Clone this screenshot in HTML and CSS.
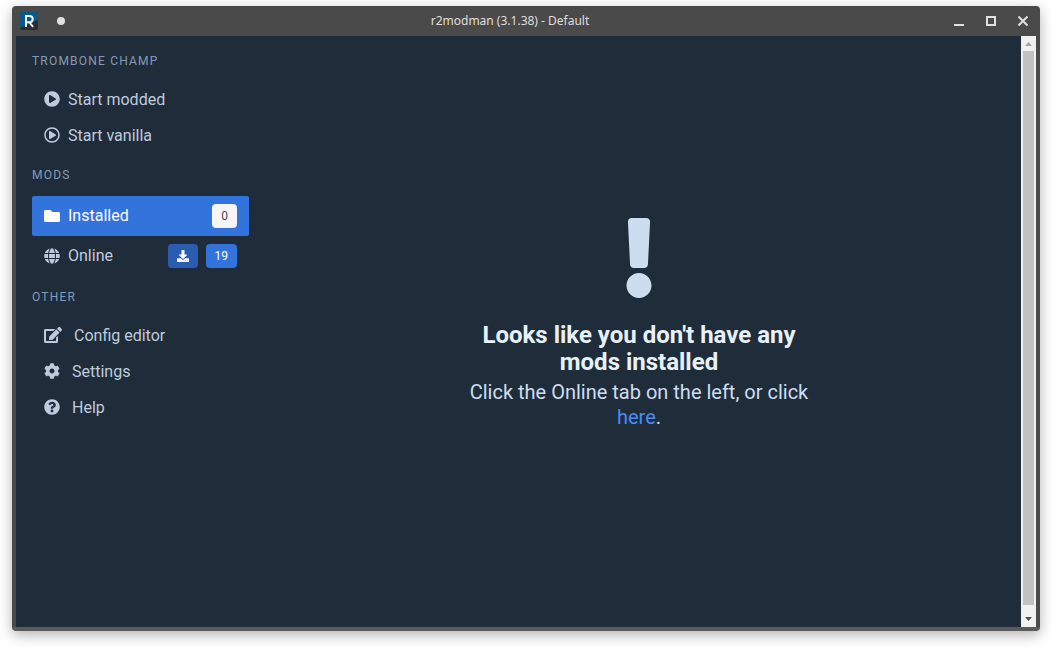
FILE: index.html
```html
<!DOCTYPE html>
<html lang="en">
<head>
<meta charset="utf-8">
<title>r2modman (3.1.38) - Default</title>
<link rel="stylesheet" href="styles.css">
</head>
<body>
<div class="window">
  <header class="titlebar">
    <div class="titlebar-group">
      <button class="window-button" type="button" aria-label="Window menu">
        <svg width="20" height="20" viewBox="0 0 20 20"><rect x="1" y="1" width="18" height="18" rx="2" fill="#2b2d2f"/><path d="M1 3a2 2 0 0 1 2-2h14a2 2 0 0 1 2 2v6L1 17z" fill="#075a87"/><path d="M7 16V5h3.200c2.300 0 3.500 1.100 3.500 3s-1.200 3.200-3.500 3.200H7M10.300 11.200l3.800 4.800" fill="none" stroke="#f2f4f6" stroke-width="2"/></svg>
      </button>
      <button class="window-button" type="button" aria-label="Keep on all desktops"><span class="pin-dot"></span></button>
    </div>
    <div class="window-title">r2modman (3.1.38) - Default</div>
    <div class="titlebar-group">
      <button class="window-button" type="button" aria-label="Minimize">
        <svg width="10" height="10" viewBox="0 0 10 10"><path d="M0 8h10v2H0z" fill="#e0e0e0"/></svg>
      </button>
      <button class="window-button" type="button" aria-label="Maximize">
        <svg width="10" height="10" viewBox="0 0 10 10"><path d="M1 1h8v8H1z" fill="none" stroke="#e0e0e0" stroke-width="2"/></svg>
      </button>
      <button class="window-button" type="button" aria-label="Close">
        <svg width="10" height="10" viewBox="0 0 10 10"><path d="M0.500 0.500l9 9M9.500 0.500l-9 9" stroke="#e0e0e0" stroke-width="2"/></svg>
      </button>
    </div>
  </header>
  <div class="content">
    <nav class="sidebar">
      <p class="menu-label">Trombone Champ</p>
      <ul class="menu-list">
        <li><a class="menu-link" href="#modded"><svg class="icon" viewBox="0 0 512 512"><path d="M256 8C119 8 8 119 8 256s111 248 248 248 248-111 248-248S393 8 256 8zm115.700 272l-176 101c-15.800 8.800-35.700-2.500-35.700-21V152c0-18.400 19.800-29.800 35.700-21l176 107c16.400 9.200 16.400 32.900 0 42z"/></svg>Start modded</a></li>
        <li><a class="menu-link" href="#vanilla"><svg class="icon" viewBox="0 0 512 512"><path d="M371.700 238l-176-107c-15.800-8.800-35.700 2.500-35.700 21v208c0 18.400 19.800 29.800 35.700 21l176-101c16.400-9.100 16.400-32.800 0-42zM504 256C504 119 393 8 256 8S8 119 8 256s111 248 248 248 248-111 248-248zm-448 0c0-110.500 89.500-200 200-200s200 89.500 200 200-89.500 200-200 200S56 366.500 56 256z"/></svg>Start vanilla</a></li>
      </ul>
      <p class="menu-label">Mods</p>
      <ul class="menu-list">
        <li><a class="menu-link is-active" href="#installed" aria-current="page"><svg class="icon icon-tagged" viewBox="0 0 512 512"><path d="M464 128H272l-64-64H48C21.490 64 0 85.490 0 112v288c0 26.510 21.490 48 48 48h416c26.510 0 48-21.490 48-48V176c0-26.510-21.490-48-48-48z"/></svg>Installed<span class="tags"><span class="tag">0</span></span></a></li>
        <li><a class="menu-link" href="#online"><svg class="icon icon-tagged" viewBox="0 0 496 512"><path d="M336.500 160C322 70.700 287.800 8 248 8s-74 62.700-88.500 152h177zM152 256c0 22.200 1.200 43.500 3.300 64h185.300c2.100-20.500 3.300-41.800 3.300-64s-1.200-43.500-3.300-64H155.300c-2.100 20.500-3.300 41.800-3.300 64zm324.700-96c-28.600-67.900-86.500-120.400-158-141.600 24.400 33.800 41.200 84.700 50 141.600h108zM177.200 18.400C105.800 39.600 47.800 92.100 19.300 160h108c8.700-56.900 25.500-107.800 49.900-141.600zM487.400 192H372.700c2.100 21 3.300 42.500 3.300 64s-1.200 43-3.300 64h114.600c5.500-20.500 8.600-41.800 8.600-64s-3.100-43.500-8.500-64zM120 256c0-21.500 1.200-43 3.300-64H8.600C3.200 212.500 0 233.800 0 256s3.200 43.500 8.600 64h114.600c-2-21-3.200-42.500-3.200-64zm39.500 96c14.500 89.300 48.700 152 88.500 152s74-62.700 88.500-152h-177zm159.300 141.600c71.400-21.200 129.400-73.700 158-141.600h-108c-8.800 56.900-25.600 107.800-50 141.600zM19.300 352c28.600 67.900 86.500 120.400 158 141.600-24.400-33.800-41.200-84.700-50-141.600h-108z"/></svg>Online<span class="tags"><span class="tag tag-download"><svg class="tag-icon" viewBox="0 0 512 512"><path d="M216 0h80c13.300 0 24 10.700 24 24v168h87.700c17.800 0 26.700 21.500 14.100 34.100L269.700 378.300c-7.500 7.500-19.800 7.500-27.300 0L90.100 226.100c-12.600-12.600-3.700-34.100 14.100-34.100H192V24c0-13.300 10.700-24 24-24zm296 376v112c0 13.300-10.700 24-24 24H24c-13.300 0-24-10.700-24-24V376c0-13.300 10.700-24 24-24h146.700l49 49c20.100 20.100 52.500 20.100 72.600 0l49-49H488c13.300 0 24 10.700 24 24zm-124 88c0-11-9-20-20-20s-20 9-20 20 9 20 20 20 20-9 20-20zm64 0c0-11-9-20-20-20s-20 9-20 20 9 20 20 20 20-9 20-20z"/></svg></span><span class="tag tag-link">19</span></span></a></li>
      </ul>
      <p class="menu-label">Other</p>
      <ul class="menu-list">
        <li><a class="menu-link menu-link-wide" href="#config"><svg class="icon icon-edit" viewBox="0 0 576 512"><path d="M402.600 83.200l90.200 90.200c3.800 3.800 3.800 10 0 13.800L274.400 405.600l-92.800 10.300c-12.400 1.400-22.900-9.100-21.500-21.500l10.300-92.800L388.800 83.200c3.800-3.800 10-3.800 13.800 0zm162-22.900l-48.800-48.800c-15.200-15.200-39.900-15.200-55.200 0l-35.400 35.400c-3.800 3.800-3.800 10 0 13.800l90.200 90.200c3.800 3.800 10 3.800 13.800 0l35.400-35.400c15.200-15.300 15.200-40 0-55.200zM384 346.200V448H64V128h229.800c3.200 0 6.200-1.300 8.500-3.500l40-40c7.600-7.600 2.200-20.500-8.500-20.500H48C21.500 64 0 85.500 0 112v352c0 26.500 21.500 48 48 48h352c26.500 0 48-21.500 48-48V306.200c0-10.700-12.900-16-20.500-8.500l-40 40c-2.200 2.300-3.500 5.300-3.500 8.500z"/></svg>Config editor</a></li>
        <li><a class="menu-link menu-link-wide" href="#settings"><svg class="icon" viewBox="0 0 512 512"><path d="M487.400 315.700l-42.600-24.600c4.300-23.200 4.300-47 0-70.200l42.600-24.600c4.900-2.800 7.100-8.600 5.500-14-11.100-35.600-30-67.800-54.700-94.600-3.800-4.100-10-5.100-14.800-2.300L380.800 110c-17.900-15.400-38.500-27.300-60.800-35.100V25.800c0-5.600-3.900-10.500-9.400-11.700-36.700-8.200-74.300-7.800-109.200 0-5.500 1.200-9.400 6.100-9.400 11.700V75c-22.200 7.900-42.800 19.800-60.800 35.100L88.700 85.500c-4.900-2.800-11-1.900-14.800 2.300-24.700 26.700-43.600 58.900-54.700 94.600-1.700 5.400.6 11.200 5.500 14L67.300 221c-4.300 23.200-4.300 47 0 70.200l-42.600 24.600c-4.900 2.800-7.100 8.600-5.500 14 11.100 35.600 30 67.800 54.700 94.600 3.800 4.100 10 5.100 14.800 2.300l42.600-24.600c17.900 15.400 38.500 27.300 60.800 35.100v49.200c0 5.600 3.900 10.500 9.400 11.700 36.700 8.200 74.300 7.800 109.200 0 5.500-1.200 9.400-6.100 9.400-11.700v-49.200c22.200-7.900 42.800-19.800 60.800-35.100l42.600 24.600c4.900 2.800 11 1.900 14.800-2.300 24.700-26.700 43.600-58.900 54.700-94.600 1.500-5.500-.7-11.300-5.600-14.100zM256 336c-44.100 0-80-35.900-80-80s35.900-80 80-80 80 35.900 80 80-35.900 80-80 80z"/></svg>Settings</a></li>
        <li><a class="menu-link menu-link-wide" href="#help"><svg class="icon" viewBox="0 0 512 512"><path d="M504 256c0 137-111 248-248 248S8 393 8 256C8 119 119 8 256 8s248 111 248 248zM262.655 90c-54.497 0-89.255 22.957-116.549 63.758-3.536 5.286-2.353 12.415 2.715 16.258l34.699 26.310c5.205 3.947 12.621 3.008 16.665-2.122 17.864-22.658 30.113-35.797 57.303-35.797 20.429 0 45.698 13.148 45.698 32.958 0 14.976-12.363 22.667-32.534 33.976C247.128 238.528 216 254.941 216 296v4c0 6.627 5.373 12 12 12h56c6.627 0 12-5.373 12-12v-1.333c0-28.462 83.186-29.647 83.186-106.667 0-58.002-60.165-102-116.531-102zM256 338c-25.365 0-46 20.635-46 46 0 25.364 20.635 46 46 46s46-20.636 46-46c0-25.365-20.635-46-46-46z"/></svg>Help</a></li>
      </ul>
    </nav>
    <main class="main">
      <div class="empty">
        <svg class="empty-icon" viewBox="0 0 192 512"><path d="M176 432c0 44.112-35.888 80-80 80s-80-35.888-80-80 35.888-80 80-80 80 35.888 80 80zM25.260 25.199l13.600 272C39.499 309.972 50.041 320 62.830 320h66.340c12.789 0 23.331-10.028 23.970-22.801l13.600-272C167.425 11.490 156.496 0 142.770 0H49.230C35.504 0 24.575 11.490 25.260 25.199z"/></svg>
        <h1 class="empty-title">Looks like you don't have any mods installed</h1>
        <p class="empty-text">Click the Online tab on the left, or click <a class="empty-link" href="#online">here</a>.</p>
      </div>
    </main>
    <div class="scrollbar" aria-hidden="true">
      <svg class="scroll-arrow" viewBox="0 0 15 15"><path d="M4 10h7L7.500 6z" fill="#a3a3a3"/></svg>
      <div class="scroll-track"><div class="scroll-thumb"></div></div>
      <svg class="scroll-arrow" viewBox="0 0 15 15"><path d="M4 5h7L7.500 9z" fill="#505050"/></svg>
    </div>
  </div>
</div>
</body>
</html>
```
FILE: styles.css
```css
* {
  box-sizing: border-box;
}

body {
  margin: 0;
  height: 100vh;
  padding: 6px 12px 16px;
  background: #ffffff;
  font-family: Roboto, "Liberation Sans", sans-serif;
  font-size: 16px;
  overflow: hidden;
}

h1,
p,
ul {
  margin: 0;
  padding: 0;
}

ul {
  list-style: none;
}

a {
  text-decoration: none;
}

.window {
  display: flex;
  flex-direction: column;
  height: 100%;
  border-radius: 4px;
  background: #4a4a4a;
  border-bottom: 4px solid #5a5a5a;
  box-shadow: 0 4px 14px rgba(0, 0, 0, 0.3);
}

.titlebar {
  display: flex;
  align-items: center;
  height: 30px;
  padding: 0 1px;
}

.titlebar-group {
  display: flex;
}

.window-button {
  display: flex;
  align-items: center;
  justify-content: center;
  width: 32px;
  height: 30px;
  padding: 0;
  border: 0;
  background: none;
}

.pin-dot {
  width: 8px;
  height: 8px;
  border-radius: 50%;
  background: #e0e0e0;
}

.window-title {
  flex: 1;
  text-align: center;
  font-family: "Noto Sans", sans-serif;
  font-size: 12px;
  line-height: 30px;
  color: #dedede;
}

.content {
  flex: 1;
  min-height: 0;
  display: flex;
  margin: 0 4px;
  background: #1f2d3b;
}

.sidebar {
  flex: 0 0 241px;
  padding: 16px 8px 16px 16px;
}

.menu-label {
  font-size: 12px;
  line-height: 18px;
  letter-spacing: 0.1em;
  text-transform: uppercase;
  color: #8799b5;
  margin: 12px 0;
}

.menu-label:first-child {
  margin-top: 0;
}

.menu-link {
  display: flex;
  align-items: center;
  gap: 8px;
  padding: 8px 12px;
  line-height: 20px;
  border-radius: 2px;
  color: #becbdd;
}

.menu-link-wide {
  gap: 12px;
}

.is-active {
  background: #3273dc;
  color: #ffffff;
}

.icon {
  width: 16px;
  height: 16px;
  margin-bottom: 2px;
  fill: currentColor;
}

.icon-tagged {
  margin-bottom: 0;
}

.icon-edit {
  width: 18px;
}

.tags {
  display: flex;
  gap: 8px;
  margin-left: auto;
}

.tag {
  display: flex;
  align-items: center;
  height: 24px;
  padding: 0 9px;
  border-radius: 4px;
  font-size: 12px;
  background: #f5f5f5;
  color: #4a4a4a;
}

.tag-download {
  background: #2a5cb4;
  color: #ffffff;
}

.tag-link {
  background: #3273dc;
  color: #ffffff;
}

.tag-icon {
  width: 12px;
  height: 12px;
  fill: currentColor;
}

.main {
  flex: 1;
  display: flex;
  align-items: center;
  justify-content: center;
  padding-bottom: 15px;
}

.empty {
  width: 48%;
  text-align: center;
}

.empty-icon {
  display: block;
  height: 80px;
  margin: 0 auto 24px;
  fill: #cdddf0;
}

.empty-title {
  font-size: 24px;
  line-height: 27px;
  font-weight: 700;
  color: #e8f1fa;
}

.empty-text {
  margin-top: 4px;
  font-size: 20px;
  line-height: 25px;
  color: #cdddf0;
}

.empty-link {
  color: #4a8bf5;
}

.scrollbar {
  display: flex;
  flex-direction: column;
  width: 15px;
  background: #f1f1f1;
}

.scroll-arrow {
  width: 15px;
  height: 15px;
}

.scroll-track {
  flex: 1;
  padding: 0 2px 7px;
}

.scroll-thumb {
  height: 100%;
  background: #c1c1c1;
}
```
